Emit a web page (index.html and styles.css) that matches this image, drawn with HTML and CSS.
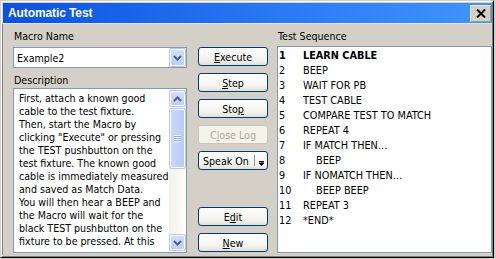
FILE: index.html
```html
<!DOCTYPE html>
<html lang="en">

<head>
    <meta charset="UTF-8">
    <title>Automatic Test</title>
    <link rel="stylesheet" href="styles.css">
</head>

<body>
    <div class="window">
        <div class="titlebar">
            <span class="title">Automatic Test</span>
            <span class="close">
                <svg width="10" height="9" viewBox="0 0 10 9">
                    <path d="M1 0.5 L9 8.5 M9 0.5 L1 8.5" stroke="#000" stroke-width="2" fill="none" />
                </svg>
            </span>
        </div>
        <div class="client">
            <div class="col-left">
                <div class="label">Macro Name</div>
                <div class="combo">
                    <span class="combo-value">Example2</span>
                    <span class="sb-btn combo-btn">
                        <svg width="9" height="6" viewBox="0 0 9 6">
                            <path d="M1 1 L4.5 4.5 L8 1" stroke="#4d6185" stroke-width="2" fill="none" />
                        </svg>
                    </span>
                </div>
                <div class="label label-desc">Description</div>
                <div class="desc">
                    <div class="desc-text">
                        First, attach a known good<br>
                        cable to the test fixture.<br>
                        Then, start the Macro by<br>
                        clicking "Execute" or pressing<br>
                        the TEST pushbutton on the<br>
                        test fixture. The known good<br>
                        cable is immediately measured<br>
                        and saved as Match Data.<br>
                        You will then hear a BEEP and<br>
                        the Macro will wait for the<br>
                        black TEST pushbutton on the<br>
                        fixture to be pressed. At this
                    </div>
                    <div class="scrollbar">
                        <span class="sb-btn">
                            <svg width="9" height="6" viewBox="0 0 9 6">
                                <path d="M1 5 L4.5 1.5 L8 5" stroke="#4d6185" stroke-width="2" fill="none" />
                            </svg>
                        </span>
                        <div class="track">
                            <div class="thumb">
                                <span class="grip"></span>
                            </div>
                        </div>
                        <span class="sb-btn">
                            <svg width="9" height="6" viewBox="0 0 9 6">
                                <path d="M1 1 L4.5 4.5 L8 1" stroke="#4d6185" stroke-width="2" fill="none" />
                            </svg>
                        </span>
                    </div>
                </div>
            </div>

            <div class="col-buttons">
                <button class="btn"><u>E</u>xecute</button>
                <button class="btn"><u>S</u>tep</button>
                <button class="btn">Sto<u>p</u></button>
                <button class="btn" disabled>C<u>l</u>ose Log</button>
                <button class="btn btn-split">
                    <span class="split-label">Speak On</span>
                    <span class="split-sep"></span>
                    <span class="split-arrow">
                        <svg width="5" height="5" viewBox="0 0 5 5">
                            <path d="M0 0.5 H5 M0 2 H5 L2.5 4.5 Z" stroke="#000" stroke-width="1" fill="#000" />
                        </svg>
                    </span>
                </button>
                <button class="btn btn-edit">E<u>d</u>it</button>
                <button class="btn"><u>N</u>ew</button>
            </div>

            <div class="col-seq">
                <div class="label">Test Sequence</div>
                <ol class="seq">
                    <li class="current"><span class="num">1</span>LEARN CABLE</li>
                    <li><span class="num">2</span>BEEP</li>
                    <li><span class="num">3</span>WAIT FOR PB</li>
                    <li><span class="num">4</span>TEST CABLE</li>
                    <li><span class="num">5</span>COMPARE TEST TO MATCH</li>
                    <li><span class="num">6</span>REPEAT 4</li>
                    <li><span class="num">7</span>IF MATCH THEN…</li>
                    <li class="nested"><span class="num">8</span>BEEP</li>
                    <li><span class="num">9</span>IF NOMATCH THEN…</li>
                    <li class="nested"><span class="num">10</span>BEEP BEEP</li>
                    <li><span class="num">11</span>REPEAT 3</li>
                    <li><span class="num">12</span>*END*</li>
                </ol>
            </div>
        </div>
    </div>
</body>

</html>
```

FILE: styles.css
```css
body {
    margin: 0;
    background: #d4d0c8;
    font-family: "DejaVu Sans Condensed", "Liberation Sans", Arial, sans-serif;
    font-size: 10.6px;
    color: #000;
}

.window {
    width: 494px;
    height: 258px;
    box-sizing: border-box;
    border: 1px solid;
    border-color: #d4d0c8 #000 #000 #d4d0c8;
    box-shadow: inset 1px 1px #fff, inset -1px -1px #808080;
    padding: 2px 1px 2px 2px;
    display: flex;
    flex-direction: column;
}

.titlebar {
    height: 20px;
    flex-shrink: 0;
    display: flex;
    align-items: center;
    justify-content: space-between;
    padding: 0 1px 0 5px;
    background: linear-gradient(to right, #0a52df, #2a7cf6 60%, #3f95ff);
    border-bottom: 1px solid #e6e3dc;
}

.title {
    color: #fff;
    font-family: "Liberation Sans", Arial, sans-serif;
    font-weight: bold;
    font-size: 12px;
    letter-spacing: -0.1px;
}

.close {
    width: 21px;
    height: 17px;
    box-sizing: border-box;
    display: flex;
    align-items: center;
    justify-content: center;
    background: #d4d0c8;
    box-shadow: inset 1px 1px #e8e6e0, inset -1px -1px #a09c94;
}

.client {
    flex: 1;
    display: flex;
    padding: 6px 0 0 10px;
    border-left: 1px solid #808080;
    margin-left: -1px;
}

.label {
    height: 13px;
    line-height: 13px;
    padding-left: 1px;
}

/* left column */
.col-left {
    width: 174px;
    display: flex;
    flex-direction: column;
}

.combo {
    margin-top: 4px;
    height: 21px;
    flex-shrink: 0;
    box-sizing: border-box;
    border: 1px solid #7f9db9;
    background: #fff;
    display: flex;
    align-items: center;
    justify-content: space-between;
    padding: 0 1px 0 3px;
}

.combo-value {
    padding-top: 1px;
}

.sb-btn {
    width: 15px;
    height: 15px;
    flex-shrink: 0;
    box-sizing: border-box;
    display: flex;
    align-items: center;
    justify-content: center;
    border: 1px solid #fff;
    border-radius: 2px;
    background: linear-gradient(#d3ddfa, #bccdf8);
    box-shadow: 0 0 0 1px #b4c6f2;
}

.combo-btn {
    height: 17px;
}

.label-desc {
    margin-top: 6px;
}

.desc {
    margin-top: 1px;
    height: 165px;
    flex-shrink: 0;
    box-sizing: border-box;
    border: 1px solid #7f9db9;
    background: #fff;
    display: flex;
    overflow: hidden;
}

.desc-text {
    flex: 1;
    padding: 3px 0 0 5px;
    line-height: 13px;
    white-space: nowrap;
    overflow: hidden;
}

.scrollbar {
    width: 17px;
    display: flex;
    flex-direction: column;
    align-items: center;
    padding: 2px 0;
    box-sizing: border-box;
    background: linear-gradient(to right, #f3f1ec, #fefefe);
}

.track {
    flex: 1;
    width: 100%;
    display: flex;
    flex-direction: column;
    align-items: center;
    padding-top: 3px;
}

.thumb {
    width: 15px;
    height: 59px;
    box-sizing: border-box;
    border: 1px solid #fff;
    border-radius: 2px;
    background: linear-gradient(to right, #c9d8fc, #b8cbf8);
    box-shadow: 0 0 0 1px #b4c6f2;
    display: flex;
    align-items: center;
    justify-content: center;
}

.grip {
    width: 7px;
    height: 7px;
    background: repeating-linear-gradient(#eef3fe 0 1px, #8cb0f8 1px 2px);
}

/* buttons */
.col-buttons {
    width: 70px;
    margin: 0 9px 0 11px;
    padding-top: 17px;
    display: flex;
    flex-direction: column;
}

.btn {
    height: 19px;
    flex-shrink: 0;
    margin: 0 0 7px;
    padding: 0;
    box-sizing: border-box;
    font: inherit;
    color: #000;
    border: 1px solid #003c74;
    border-radius: 3px;
    background: linear-gradient(#ffffff, #f4f3ee 70%, #e3e0d5);
}

.btn:last-child {
    margin-bottom: 0;
}

.btn:disabled {
    color: #aca899;
    border-color: #c9c7ba;
    background: #f5f4ea;
}

.btn-split {
    display: flex;
    align-items: center;
    padding-left: 4px;
}

.split-label {
    width: 51px;
    text-align: left;
}

.split-sep {
    width: 1px;
    height: 11px;
    background: #8f8f8f;
}

.split-arrow {
    display: flex;
    padding: 5px 0 0 4px;
}

.btn-edit {
    margin-top: 30px;
}

/* sequence list */
.col-seq {
    width: 215px;
    display: flex;
    flex-direction: column;
}

.seq {
    margin: 3px 0 0;
    padding: 1px 0 0 1px;
    height: 207px;
    flex-shrink: 0;
    box-sizing: border-box;
    list-style: none;
    border: 1px solid #7f9db9;
    background: #fff;
    font-size: 10.8px;
    line-height: 15px;
}

.seq .num {
    display: inline-block;
    width: 24px;
}

.seq .current {
    font-weight: bold;
}

.seq .nested .num {
    width: 37px;
}
```
